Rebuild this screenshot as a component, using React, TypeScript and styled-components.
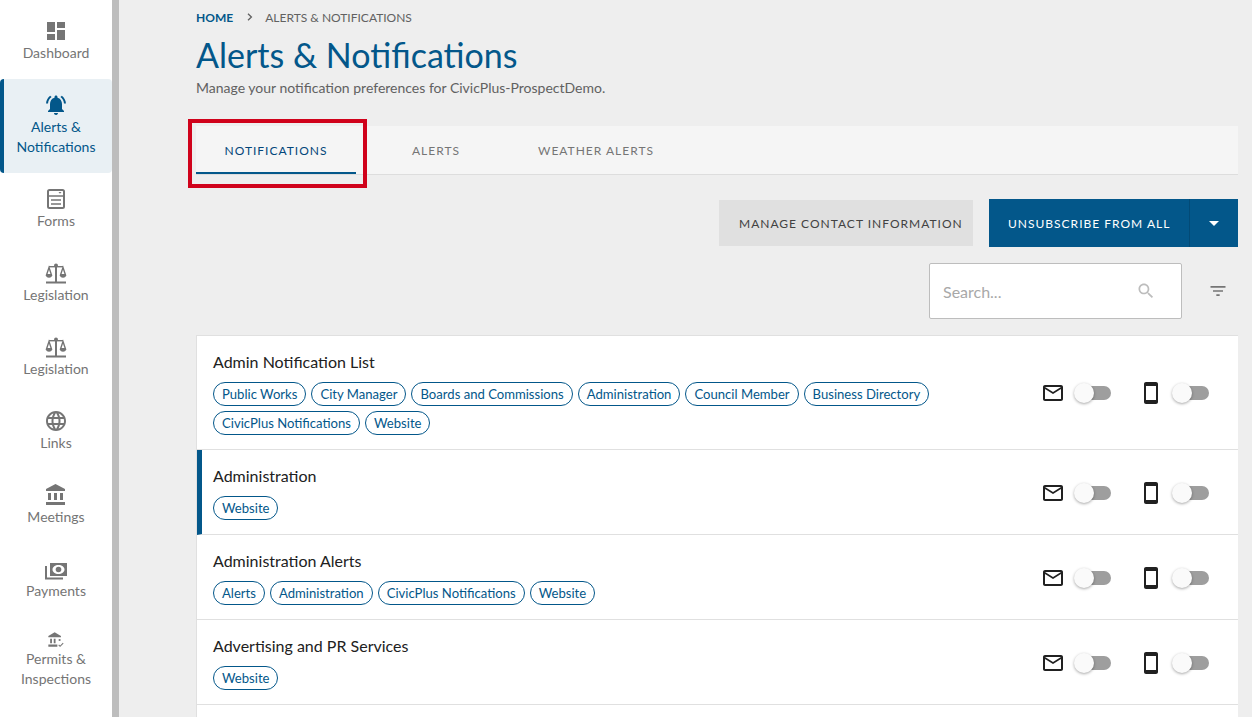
import React from 'react';
import styled, { createGlobalStyle } from 'styled-components';

const GlobalStyle = createGlobalStyle`
  html, body {
    margin: 0;
    height: 100%;
    overflow: hidden;
    background: #eeeeee;
    font-family: Lato, "Noto Sans", sans-serif;
  }
  * {
    box-sizing: border-box;
  }
`;

const BLUE = '#03578a';

const Page = styled.div`
  display: flex;
  height: 717px;
  overflow: hidden;
`;

const Sidebar = styled.nav`
  flex: 0 0 119px;
  height: 717px;
  padding-top: 5px;
  background: #fff;
  border-right: 7px solid #bdbdbd;
`;

const NavItem = styled.a<{ $active?: boolean }>`
  display: flex;
  flex-direction: column;
  align-items: center;
  height: ${(p) => (p.$active ? 94 : 74)}px;
  padding-top: 14px;
  font-size: 14px;
  line-height: 20px;
  text-align: center;
  color: ${(p) => (p.$active ? BLUE : '#757575')};
  background: ${(p) => (p.$active ? '#e9f0f4' : 'transparent')};
  border-left: ${(p) => (p.$active ? `4px solid ${BLUE}` : 'none')};
  border-radius: ${(p) => (p.$active ? '4px' : '0')};
  padding-right: ${(p) => (p.$active ? '4px' : '0')};
  svg {
    flex: none;
  }
`;

const Main = styled.main`
  flex: 1;
  min-width: 0;
  padding: 10px 14px 0 77px;
  position: relative;
`;

const Crumbs = styled.div`
  display: flex;
  align-items: center;
  height: 14px;
  font-size: 12px;
  color: #616161;
`;

const CrumbHome = styled.span`
  color: ${BLUE};
  font-weight: 700;
`;

const Chevron = styled.svg`
  margin: 0 12px 0 14px;
`;

const Title = styled.h1`
  margin: 9px 0 0;
  font-size: 34px;
  line-height: 44px;
  font-weight: 400;
  color: ${BLUE};
`;

const Subtitle = styled.p`
  margin: 1px 0 0;
  font-size: 14px;
  line-height: 20px;
  color: #616161;
`;

const Tabs = styled.div`
  display: flex;
  height: 49px;
  margin-top: 28px;
  background: #f5f5f5;
  border-bottom: 1px solid #dddddd;
`;

const Tab = styled.div<{ $active?: boolean; $width: number }>`
  width: ${(p) => p.$width}px;
  height: 48px;
  padding-top: 18px;
  text-align: center;
  font-size: 12px;
  line-height: 14px;
  letter-spacing: 1px;
  color: ${(p) => (p.$active ? '#03467a' : '#757575')};
  border-bottom: ${(p) => (p.$active ? `2px solid ${BLUE}` : 'none')};
`;

const Callout = styled.div`
  position: absolute;
  left: 69px;
  top: 119px;
  width: 179px;
  height: 69px;
  border: 4px solid #d0021b;
  pointer-events: none;
`;

const Actions = styled.div`
  display: flex;
  justify-content: flex-end;
  align-items: center;
  gap: 16px;
  margin-top: 24px;
`;

const SecondaryButton = styled.button`
  width: 254px;
  height: 46px;
  padding: 0 0 0 20px;
  border: 0;
  background: #e0e0e0;
  color: #424242;
  text-align: left;
  font-family: inherit;
  font-size: 12px;
  letter-spacing: 1px;
`;

const SplitButton = styled.div`
  display: flex;
  height: 48px;
  background: ${BLUE};
  color: #fff;
`;

const SplitLabel = styled.div`
  width: 201px;
  padding-left: 19px;
  font-size: 12px;
  letter-spacing: 1px;
  line-height: 49px;
  border-right: 1px solid #024a76;
`;

const SplitCaret = styled.div`
  display: flex;
  align-items: center;
  justify-content: center;
  width: 48px;
`;

const Caret = styled.span`
  width: 0;
  height: 0;
  border-left: 5px solid transparent;
  border-right: 5px solid transparent;
  border-top: 5px solid #fff;
`;

const SearchRow = styled.div`
  display: flex;
  justify-content: flex-end;
  align-items: center;
  margin-top: 16px;
`;

const SearchBox = styled.div`
  display: flex;
  align-items: center;
  justify-content: space-between;
  width: 253px;
  height: 56px;
  padding: 1px 25px 0 13px;
  background: #fff;
  border: 1px solid #bdbdbd;
  border-radius: 2px;
  font-size: 16px;
  color: #a8a8a8;
  svg {
    margin-top: -1px;
  }
`;

const FilterIcon = styled.svg`
  margin: 0 10px 0 26px;
`;

const List = styled.div`
  margin-top: 16px;
  background: #fff;
  border: 1px solid #e0e0e0;
  border-right: 0;
`;

const Row = styled.div<{ $marked?: boolean }>`
  display: flex;
  align-items: center;
  justify-content: space-between;
  min-height: 85px;
  padding: 14px 29px 14px ${(p) => (p.$marked ? 11 : 16)}px;
  border-left: ${(p) => (p.$marked ? `5px solid ${BLUE}` : 'none')};
  border-bottom: 1px solid #e0e0e0;
`;

const RowBody = styled.div`
  width: 800px;
`;

const RowTitle = styled.div`
  font-size: 16px;
  line-height: 24px;
  color: #212121;
`;

const Chips = styled.div`
  display: flex;
  flex-wrap: wrap;
  gap: 5px;
  margin-top: 8px;
`;

const Chip = styled.span`
  height: 24px;
  padding: 0 8px;
  border: 1px solid ${BLUE};
  border-radius: 12px;
  font-size: 13.1px;
  line-height: 22px;
  color: ${BLUE};
`;

const Channels = styled.div`
  display: flex;
  align-items: center;
  margin-top: 1px;
`;

const Channel = styled.div`
  display: flex;
  align-items: center;
  gap: 10px;
  margin-left: 28px;
`;

const Track = styled.div`
  position: relative;
  width: 36px;
  height: 14px;
  border-radius: 7px;
  background: #9e9e9e;
`;

const Knob = styled.span`
  position: absolute;
  left: -1px;
  top: -3px;
  width: 20px;
  height: 20px;
  border-radius: 50%;
  background: #fafafa;
  box-shadow: 0 1px 3px rgba(0, 0, 0, 0.35);
`;

const Icon: React.FC<{ d: string; size?: number; color?: string }> = ({ d, size = 24, color = 'currentColor' }) => (
  <svg width={size} height={size} viewBox="0 0 24 24" fill={color}>
    <path d={d} />
  </svg>
);

const Scale = () => (
  <svg width="24" height="24" viewBox="0 0 24 24" fill="#757575">
    <rect x="2" y="20.500" width="20" height="2" />
    <rect x="11" y="4" width="2" height="17" />
    <circle cx="12" cy="4.500" r="2" />
    <path d="M5 5h14v1.400H5z" />
    <path d="M5 6.500 2.500 14h5zM19 6.500 16.500 14h5z" fill="none" stroke="#757575" strokeWidth="1.400" />
    <path d="M2 13h6v1.500c0 1.200-1 2.200-3 2.200s-3-1-3-2.200zM16 13h6v1.500c0 1.200-1 2.200-3 2.200s-3-1-3-2.200z" />
  </svg>
);

const FormsIcon = () => (
  <svg width="24" height="24" viewBox="0 0 24 24" fill="none">
    <rect x="4" y="3" width="16" height="18" rx="1.500" stroke="#757575" strokeWidth="2" />
    <path d="M4 9h16M7 13h10M7 17h10" stroke="#757575" strokeWidth="1.600" />
    <path d="M14.500 5h3l-1.500 1.800z" fill="#757575" />
  </svg>
);

const PaymentsIcon = () => (
  <svg width="24" height="24" viewBox="0 0 24 24" fill="#757575">
    <path fillRule="evenodd" d="M6 6h17v13H6zM8.500 12.500c0 2.500 2.700 4.500 6 4.500s6-2 6-4.500-2.700-4.500-6-4.500-6 2-6 4.500z" />
    <circle cx="14.500" cy="12.500" r="2.800" />
    <path d="M2 9v12.500h17" fill="none" stroke="#757575" strokeWidth="2" />
  </svg>
);

const PermitsIcon = () => (
  <svg width="18" height="18" viewBox="1.500 1.500 20 20" fill="#757575">
    <path d="M10 3 3 7v1.500h14V7l-7-4zM5 10v5h2v-5H5zm4 0v5h2v-5H9zM3 16.500V19h10v-2.500H3z" />
    <path d="M14.500 10.500h2v2h-2z" />
    <path d="M14.500 17l1.500 1.500 3.500-3.500" fill="none" stroke="#757575" strokeWidth="1.200" />
  </svg>
);

const icons = {
  dashboard: 'M3 13h8V3H3v10zm0 8h8v-6H3v6zm10 0h8V11h-8v10zm0-18v6h8V3h-8z',
  bell: 'M7.580 4.080L6.150 2.650C3.750 4.480 2.170 7.300 2.030 10.500h2c.15-2.650 1.510-4.970 3.550-6.420zm12.390 6.420h2c-.15-3.200-1.730-6.020-4.120-7.850l-1.420 1.430c2.020 1.450 3.390 3.770 3.540 6.420zM18 11c0-3.070-1.640-5.640-4.500-6.320V4c0-.83-.67-1.500-1.500-1.500s-1.500.67-1.500 1.500v.68C7.630 5.360 6 7.920 6 11v5l-2 2v1h16v-1l-2-2v-5zm-6 11c.14 0 .27-.01.4-.04.65-.14 1.180-.58 1.440-1.180.1-.24.15-.5.15-.78h-4c.01 1.100.9 2 2.010 2z',
  globe: 'M11.990 2C6.470 2 2 6.480 2 12s4.470 10 9.990 10C17.520 22 22 17.520 22 12S17.520 2 11.990 2zm6.930 6h-2.950c-.32-1.250-.78-2.450-1.380-3.560 1.840.63 3.370 1.910 4.330 3.560zM12 4.040c.83 1.200 1.480 2.530 1.910 3.960h-3.820c.43-1.430 1.080-2.760 1.910-3.960zM4.260 14C4.100 13.360 4 12.690 4 12s.1-1.360.26-2h3.380c-.08.66-.14 1.320-.14 2 0 .68.06 1.340.14 2H4.260zm.82 2h2.950c.32 1.250.78 2.450 1.380 3.560-1.840-.63-3.370-1.900-4.330-3.560zm2.950-8H5.080c.96-1.660 2.490-2.930 4.330-3.560C8.810 5.550 8.350 6.750 8.030 8zM12 19.960c-.83-1.200-1.480-2.530-1.910-3.960h3.820c-.43 1.430-1.080 2.760-1.910 3.960zM14.340 14H9.660c-.09-.66-.16-1.320-.16-2 0-.68.07-1.350.16-2h4.680c.09.65.16 1.320.16 2 0 .68-.07 1.340-.16 2zm.25 5.560c.6-1.110 1.060-2.310 1.380-3.560h2.950c-.96 1.650-2.490 2.930-4.330 3.560zM16.360 14c.08-.66.14-1.320.14-2 0-.68-.06-1.340-.14-2h3.380c.16.64.26 1.310.26 2s-.1 1.360-.26 2h-3.380z',
  bank: 'M4 10v7h3v-7H4zm6 0v7h3v-7h-3zM2 22h19v-3H2v3zm14-12v7h3v-7h-3zm-4.500-9L2 6v2h19V6l-9.500-5z',
  mail: 'M20 4H4c-1.100 0-1.990.9-1.990 2L2 18c0 1.100.9 2 2 2h16c1.100 0 2-.9 2-2V6c0-1.100-.9-2-2-2zm0 14H4V8l8 5 8-5v10zm-8-7L4 6h16l-8 5z',
  phone: 'M17 1.010 7 1c-1.100 0-2 .9-2 2v18c0 1.100.9 2 2 2h10c1.100 0 2-.9 2-2V3c0-1.100-.9-1.990-2-1.990zM17 19H7V5h10v14z',
  search: 'M15.500 14h-.79l-.28-.27C15.410 12.590 16 11.110 16 9.500 16 5.910 13.090 3 9.500 3S3 5.910 3 9.500 5.910 16 9.500 16c1.610 0 3.090-.59 4.230-1.570l.27.28v.79l5 4.990L20.490 19l-4.990-5zm-6 0C7.010 14 5 11.990 5 9.500S7.010 5 9.500 5 14 7.010 14 9.500 11.990 14 9.500 14z',
  filter: 'M10 18h4v-2h-4v2zM3 6v2h18V6H3zm3 7h12v-2H6v2z',
};

const rows = [
  { title: 'Admin Notification List', chips: ['Public Works', 'City Manager', 'Boards and Commissions', 'Administration', 'Council Member', 'Business Directory', 'CivicPlus Notifications', 'Website'] },
  { title: 'Administration', chips: ['Website'], marked: true },
  { title: 'Administration Alerts', chips: ['Alerts', 'Administration', 'CivicPlus Notifications', 'Website'] },
  { title: 'Advertising and PR Services', chips: ['Website'] },
];

const Toggle = () => (
  <Track>
    <Knob />
  </Track>
);

export default function App() {
  return (
    <Page>
      <GlobalStyle />
      <Sidebar>
        <NavItem><Icon d={icons.dashboard} color="#757575" />Dashboard</NavItem>
        <NavItem $active><Icon d={icons.bell} color={BLUE} />Alerts &amp; Notifications</NavItem>
        <NavItem><FormsIcon />Forms</NavItem>
        <NavItem><Scale />Legislation</NavItem>
        <NavItem><Scale />Legislation</NavItem>
        <NavItem><Icon d={icons.globe} color="#757575" />Links</NavItem>
        <NavItem><Icon d={icons.bank} color="#757575" />Meetings</NavItem>
        <NavItem><PaymentsIcon />Payments</NavItem>
        <NavItem><PermitsIcon />Permits &amp; Inspections</NavItem>
      </Sidebar>
      <Main>
        <Crumbs>
          <CrumbHome>HOME</CrumbHome>
          <Chevron width="6" height="8" viewBox="0 0 6 8" fill="none">
            <path d="M1 .8 4.400 4 1 7.200" stroke="#616161" strokeWidth="1.300" />
          </Chevron>
          ALERTS &amp; NOTIFICATIONS
        </Crumbs>
        <Title>Alerts &amp; Notifications</Title>
        <Subtitle>Manage your notification preferences for CivicPlus-ProspectDemo.</Subtitle>
        <Tabs>
          <Tab $active $width={160}>NOTIFICATIONS</Tab>
          <Tab $width={160}>ALERTS</Tab>
          <Tab $width={160}>WEATHER ALERTS</Tab>
        </Tabs>
        <Callout />
        <Actions>
          <SecondaryButton>MANAGE CONTACT INFORMATION</SecondaryButton>
          <SplitButton>
            <SplitLabel>UNSUBSCRIBE FROM ALL</SplitLabel>
            <SplitCaret><Caret /></SplitCaret>
          </SplitButton>
        </Actions>
        <SearchRow>
          <SearchBox>
            Search...
            <Icon d={icons.search} size={20} color="#bdbdbd" />
          </SearchBox>
          <FilterIcon width="20" height="20" viewBox="0 0 24 24" fill="#757575">
            <path d={icons.filter} />
          </FilterIcon>
        </SearchRow>
        <List>
          {rows.map((row) => (
            <Row key={row.title} $marked={row.marked}>
              <RowBody>
                <RowTitle>{row.title}</RowTitle>
                <Chips>
                  {row.chips.map((chip) => (
                    <Chip key={chip}>{chip}</Chip>
                  ))}
                </Chips>
              </RowBody>
              <Channels>
                <Channel>
                  <Icon d={icons.mail} color="#212121" />
                  <Toggle />
                </Channel>
                <Channel>
                  <Icon d={icons.phone} color="#212121" />
                  <Toggle />
                </Channel>
              </Channels>
            </Row>
          ))}
          <Row />
        </List>
      </Main>
    </Page>
  );
}
